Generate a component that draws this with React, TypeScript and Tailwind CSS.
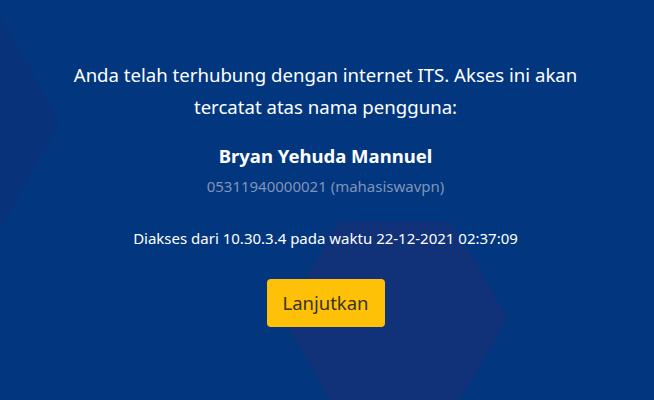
import React from "react";

export default function App() {
  return (
    <div
      className="relative w-[654px] h-[400px] overflow-hidden bg-[#02377f] text-white"
      style={{ fontFamily: '"Noto Sans", "Open Sans", sans-serif' }}
    >
      <svg
        className="absolute inset-0"
        width="654"
        height="400"
        viewBox="0 0 654 400"
        aria-hidden="true"
      >
        <polygon points="0,15 60,122 0,230" fill="#08337a" />
        <polygon points="338,222 452,222 507,318 452,414 338,414 283,318" fill="#113178" />
      </svg>
      <div className="relative flex flex-col items-center pt-[59px] pr-[3px]">
        <p className="text-[18.6px] leading-[32px] text-center">
          Anda telah terhubung dengan internet ITS. Akses ini akan
          <br />
          tercatat atas nama pengguna:
        </p>
        <p className="mt-[21px] text-[18.5px] leading-[24px] font-bold">
          Bryan Yehuda Mannuel
        </p>
        <p className="mt-[8px] text-[15px] leading-[20px] text-[#8093b8]">
          05311940000021 (mahasiswavpn)
        </p>
        <p className="mt-[32px] text-[15px] leading-[20px]">
          Diakses dari 10.30.3.4 pada waktu 22-12-2021 02:37:09
        </p>
        <button className="mt-[31px] w-[118px] h-[48px] rounded-[4px] bg-[#ffc107] text-[#36341f] text-[18.5px] flex items-center justify-center">
          Lanjutkan
        </button>
      </div>
    </div>
  );
}
